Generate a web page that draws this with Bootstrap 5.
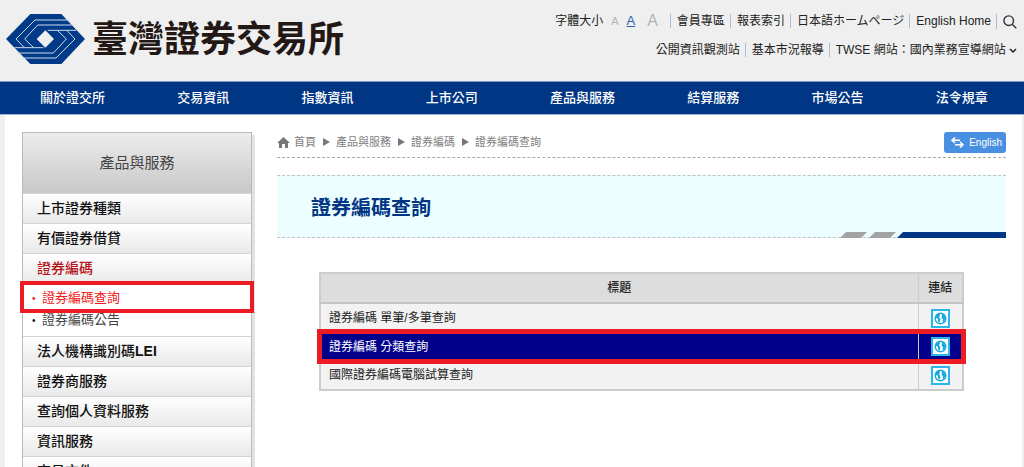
<!DOCTYPE html>
<html lang="zh-Hant">
<head>
<meta charset="utf-8">
<meta name="viewport" content="width=device-width, initial-scale=1">
<title>證券編碼查詢 - 臺灣證券交易所</title>
<link href="https://cdn.jsdelivr.net/npm/bootstrap@5.3.0/dist/css/bootstrap.min.css" rel="stylesheet">
<style>
:root { --twse-blue: #003683; --mark-red: #ed1c24; }
body { background: #efefef; color: #222; font: 12px/20px "Liberation Sans", "Noto Sans CJK TC", sans-serif; scrollbar-width: none; }
a { color: inherit; text-decoration: none; }
.site-head { min-height: 81px; }
.brand-link { padding: 14px 0 0 6px; }
.brand-name { font-size: 36px; line-height: 52px; font-weight: 700; color: #231815; padding-left: 7px; }
.tools { padding: 10px 7px 0 0; }
.tools-line { min-height: 29px; line-height: 14px; }
.tools-line > * + * { border-left: 1px solid #a9bcd8; padding-left: 6px; margin-left: 5px; }
.size-btn { border: 0; padding: 0; background: none; color: #b5b5b5; line-height: 14px; }
.size-s { font-size: 11px; } .size-m { font-size: 13px; color: #2d62a8; text-decoration: underline; } .size-l { font-size: 16px; }
.main-nav { background: var(--twse-blue); border-top: 1px solid #7d9bc4; border-bottom: 1px solid #9db3d4; padding-left: 4px; }
.main-nav .nav-link { color: #fff; font-size: 13px; line-height: 20px; font-weight: 500; padding: 6px 0; }
.page { background: #fff; margin: 0 2px 0 5px; padding: 17px 16px 20px 17px; gap: 25px; }
.side { width: 230px; border: 1px solid #bbb; box-shadow: 3px 3px 0 #e2e2e2; }
.side-title { font-size: 15px; line-height: 60px; color: #444; background: linear-gradient(#ececec, #c8c8c8); margin: 0; font-weight: 400; }
.side-link { display: block; font-size: 14px; line-height: 29px; padding-left: 14px; color: #111; font-weight: 500; background: linear-gradient(#fff, #e9e9e9); border-top: 1px solid #d4d4d4; }
.side-link.current { color: #b5121b; }
.sub-list { padding-bottom: 5px; font-size: 13px; border-top: 1px solid #ddd; }
.sub-list a { display: block; line-height: 20px; padding-left: 9px; color: #444; }
.sub-list a::before { content: "•"; color: #111; display: inline-block; width: 10px; font-size: 10px; }
.sub-list a.picked, .sub-list a.picked::before { color: #f01818; }
.sub-list a.picked { position: relative; outline: 4px solid var(--mark-red); outline-offset: -1px; line-height: 22px; padding-top: 3px; }
.crumb-bar { min-height: 26px; border-bottom: 1px dashed #aaa; color: #808080; font-size: 11px; }
.crumbs { gap: 6px; }
.btn-lang { background: #4a90e2; color: #fff; font-size: 10px; line-height: 21px; padding: 0 4px 0 7px; border: 0; border-radius: 3px; gap: 5px; }
.btn-lang:hover { background: #3579c8; color: #fff; }
.banner { margin-top: 17px; background: #ecfeff; border: dashed #b9c4c4; border-width: 1px 0; }
.banner h1 { font-size: 20px; line-height: 57px; padding: 4px 0 0 34px; font-weight: 700; color: var(--twse-blue); margin: 0; }
.banner svg { position: absolute; right: 0; bottom: -1px; }
.list-wrap { padding: 34px 42px 0 42px; }
.link-table { width: 100%; border: 2px solid #ccc; border-collapse: collapse; background: #f2f2f2; }
.link-table th { background: #ddd; text-align: center; font-weight: 500; padding: 0; line-height: 28px; border-bottom: 2px solid #c4c4c4; color: #222; }
.link-table td { height: 29px; padding: 0 8px; line-height: 20px; }
.link-table th:last-child, .link-table td:last-child { width: 45px; padding: 0; text-align: center; border-left: 1px solid #ccc; }
.link-table tr.picked { background: #00008b; color: #fff; outline: 5px solid var(--mark-red); outline-offset: -2px; }
.link-table svg { display: block; margin: 0 auto; }
</style>
</head>
<body>
<header class="site-head d-flex justify-content-between">
  <a href="#" class="brand-link d-flex align-items-start">
    <svg width="79" height="50" viewBox="0 0 237 150" aria-hidden="true">
      <path fill="#003a88" d="M73 0H166L237 75L166 150H73L0 75Z"/>
      <g fill="none" stroke="#cfdae8" stroke-width="3">
        <path d="M190 18H87L30 75L55 101M204 33H95L56 75L83 101M26 101H112M47 132H150L207 75L182 49M33 117H142L181 75L154 49M211 49H125"/>
      </g>
      <path fill="#efefef" d="M118 49L144 75L118 101L92 75Z"/>
    </svg>
    <span class="brand-name">臺灣證券交易所</span>
  </a>
  <div class="tools">
    <div class="tools-line d-flex justify-content-end align-items-start pt-1">
      <div class="d-flex align-items-end">字體大小
        <button type="button" class="size-btn size-s ms-2" aria-label="小字體">A</button>
        <button type="button" class="size-btn size-m ms-1 px-1" aria-label="中字體">A</button>
        <button type="button" class="size-btn size-l ms-2 me-1" aria-label="大字體">A</button>
      </div>
      <a href="#" class="ms-2">會員專區</a><a href="#">報表索引</a><a href="#">日本語ホームページ</a><a href="#">English Home</a>
      <a href="#" aria-label="搜尋"><svg width="14" height="14" viewBox="0 0 14 14" fill="none" stroke="#333" stroke-width="1.4"><circle cx="5.7" cy="5.7" r="4.8"/><path d="M9.2 9.2L13.3 13.3"/></svg></a>
    </div>
    <div class="tools-line d-flex justify-content-end align-items-start pt-1">
      <a href="#">公開資訊觀測站</a><a href="#">基本市況報導</a>
      <a href="#">TWSE 網站：國內業務宣導網站 <svg width="8" height="6" viewBox="0 0 8 6" fill="none" stroke="#222" stroke-width="1.5"><path d="M1 1L4 4L7 1"/></svg></a>
    </div>
  </div>
</header>
<nav class="main-nav">
  <ul class="nav nav-fill">
    <li class="nav-item"><a class="nav-link" href="#">關於證交所</a></li>
    <li class="nav-item"><a class="nav-link" href="#">交易資訊</a></li>
    <li class="nav-item"><a class="nav-link" href="#">指數資訊</a></li>
    <li class="nav-item"><a class="nav-link" href="#">上市公司</a></li>
    <li class="nav-item"><a class="nav-link" href="#">產品與服務</a></li>
    <li class="nav-item"><a class="nav-link" href="#">結算服務</a></li>
    <li class="nav-item"><a class="nav-link" href="#">市場公告</a></li>
    <li class="nav-item"><a class="nav-link" href="#">法令規章</a></li>
  </ul>
</nav>
<div class="page d-flex align-items-start">
  <aside class="side flex-shrink-0">
    <h2 class="side-title text-center">產品與服務</h2>
    <ul class="list-unstyled mb-0">
      <li><a class="side-link" href="#">上市證券種類</a></li>
      <li><a class="side-link" href="#">有價證券借貸</a></li>
      <li><a class="side-link current" href="#">證券編碼</a>
        <ul class="sub-list list-unstyled">
          <li><a class="picked" href="#">證券編碼查詢</a></li>
          <li><a href="#">證券編碼公告</a></li>
        </ul>
      </li>
      <li><a class="side-link" href="#">法人機構識別碼<b>LEI</b></a></li>
      <li><a class="side-link" href="#">證券商服務</a></li>
      <li><a class="side-link" href="#">查詢個人資料服務</a></li>
      <li><a class="side-link" href="#">資訊服務</a></li>
      <li><a class="side-link" href="#">交易文件</a></li>
    </ul>
  </aside>
  <main class="flex-grow-1">
    <div class="crumb-bar d-flex justify-content-between align-items-start">
      <nav class="crumbs d-flex align-items-center" aria-label="breadcrumb">
        <a href="#" class="d-flex align-items-center gap-1"><svg width="13" height="11" viewBox="0 0 13 11" fill="#777"><path d="M6.5 0L13 6H11V11H8V7H5V11H2V6H0Z"/></svg>首頁</a>
        <svg width="8" height="8" viewBox="0 0 8 8" fill="#777"><path d="M1 0L8 4L1 8Z"/></svg>
        <a href="#">產品與服務</a>
        <svg width="8" height="8" viewBox="0 0 8 8" fill="#777"><path d="M1 0L8 4L1 8Z"/></svg>
        <a href="#">證券編碼</a>
        <svg width="8" height="8" viewBox="0 0 8 8" fill="#777"><path d="M1 0L8 4L1 8Z"/></svg>
        <span>證券編碼查詢</span>
      </nav>
      <a href="#" class="btn btn-lang d-flex align-items-center"><svg width="13" height="11" viewBox="0 0 13 11" fill="none" stroke="#fff" stroke-width="1.6"><path d="M4 .5L1 3.3L4 6M1 3.3H9M9 5L12 7.7L9 10.5M12 7.7H4"/></svg>English</a>
    </div>
    <div class="banner position-relative">
      <h1>證券編碼查詢</h1>
      <svg width="166" height="6" viewBox="0 0 166 6" aria-hidden="true"><path fill="#a3a3a3" d="M6 0H27L21 6H0ZM35 0H56L50 6H29Z"/><path fill="#003683" d="M63 0H166V6H57Z"/></svg>
    </div>
    <div class="list-wrap">
      <svg width="0" height="0" class="position-absolute" aria-hidden="true">
        <symbol id="globe" viewBox="0 0 19 19">
          <path fill="#fff" stroke="#29b6ea" stroke-width="2" d="M1 1H18V18H1Z"/>
          <circle cx="9.500" cy="9.500" r="5.300" fill="#fff" stroke="#16a9dd" stroke-width="1.400"/>
          <path fill="#16a9dd" d="M5 6L8 4L9 6L8 8.500L9.500 10L8.500 14L7 12V10L4.500 8.500ZM10.500 4.500L13 6L14.500 9L13 13L11.500 12.500L12 10L10.500 9L11 7Z"/>
        </symbol>
      </svg>
      <table class="link-table">
        <thead><tr><th scope="col">標題</th><th scope="col">連結</th></tr></thead>
        <tbody>
          <tr><td>證券編碼 單筆/多筆查詢</td><td><a href="#" aria-label="開啟連結"><svg width="19" height="19"><use href="#globe"/></svg></a></td></tr>
          <tr class="picked"><td>證券編碼 分類查詢</td><td><a href="#" aria-label="開啟連結"><svg width="19" height="19"><use href="#globe"/></svg></a></td></tr>
          <tr><td>國際證券編碼電腦試算查詢</td><td><a href="#" aria-label="開啟連結"><svg width="19" height="19"><use href="#globe"/></svg></a></td></tr>
        </tbody>
      </table>
    </div>
  </main>
</div>
<script src="https://cdn.jsdelivr.net/npm/bootstrap@5.3.0/dist/js/bootstrap.bundle.min.js"></script>
</body>
</html>
